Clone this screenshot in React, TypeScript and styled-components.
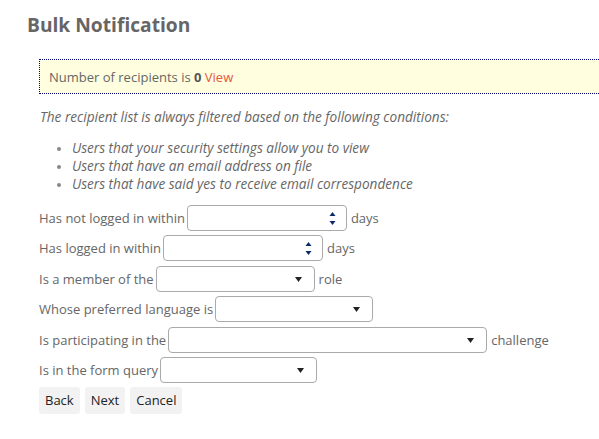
import React from "react";
import styled, { createGlobalStyle } from "styled-components";

const Global = createGlobalStyle`
  html, body { margin: 0; padding: 0; background: #fff; }
  body { font-family: "Open Sans", "Liberation Sans", sans-serif; color: #666; overflow: hidden; }
  * { box-sizing: border-box; }
`;

const Page = styled.div`
  padding: 11px 0 0 27px;
`;

const Title = styled.h1`
  margin: 0;
  font-size: 19.2px;
  line-height: 27px;
  font-weight: 700;
  color: #666;
`;

const Content = styled.div`
  margin: 21px 0 0 12px;
  font-size: 13px;
`;

const Notice = styled.div`
  height: 35px;
  display: flex;
  align-items: center;
  padding: 0 9px;
  background: #ffffe0;
  border: 1px dotted #000080;
  border-right: none;
  color: #666;
`;

const Strong = styled.b`
  font-weight: 700;
  color: #555;
`;

const LinkText = styled.a`
  color: #e8543f;
  text-decoration: none;
`;

const Intro = styled.p`
  margin: 14px 0 0 1px;
  font-style: italic;
  font-size: 13.6px;
  line-height: 18px;
  color: #666;
`;

const Conditions = styled.ul`
  margin: 13px 0 0 0;
  padding-left: 33px;
  font-style: italic;
  font-size: 13.6px;
  line-height: 18px;
  color: #666;
  li::marker { color: #888; font-size: 12px; }
`;

const Form = styled.div`
  margin-top: 12px;
  display: flex;
  flex-direction: column;
  gap: 4.4px;
`;

const Row = styled.div`
  display: flex;
  align-items: center;
  gap: 2px;
  height: 26px;
  white-space: nowrap;
`;

const Label = styled.span`
  color: #666;
`;

const Suffix = styled.span`
  margin-left: 2px;
  color: #666;
`;

const FieldBox = styled.div<{ $w: number }>`
  position: relative;
  width: ${(p) => p.$w}px;
  height: 26px;
  border: 1px solid #aaa;
  border-radius: 4px;
  background: #fff;
  display: flex;
  align-items: center;
`;

const TextInput = styled.input`
  flex: 1;
  min-width: 0;
  height: 100%;
  border: none;
  outline: none;
  background: transparent;
  font: inherit;
  padding: 0 6px;
`;

const Select = styled.select`
  appearance: none;
  -webkit-appearance: none;
  width: 100%;
  height: 100%;
  border: none;
  outline: none;
  background: transparent;
  font: inherit;
  padding: 0 6px;
`;

const Spinner = styled.svg`
  position: absolute;
  right: 10px;
  top: 5px;
`;

const Caret = styled.svg`
  position: absolute;
  right: 12px;
  top: 10px;
  pointer-events: none;
`;

const Buttons = styled.div`
  display: flex;
  gap: 5px;
  margin-top: -0.4px;
`;

const Button = styled.button`
  height: 27px;
  padding: 0 6px;
  border: none;
  border-radius: 3px;
  background: #f2f2f2;
  color: #222;
  font: inherit;
  font-size: 13px;
  cursor: pointer;
`;

const NumberField = ({ w }: { w: number }) => (
  <FieldBox $w={w}>
    <TextInput type="text" />
    <Spinner width="7" height="15" viewBox="0 0 7 15">
      <path d="M3.5 1 L6.5 5 L0.5 5 Z" fill="#0b2a6e" />
      <path d="M0.5 10 L6.5 10 L3.5 14 Z" fill="#0b2a6e" />
    </Spinner>
  </FieldBox>
);

const SelectField = ({ w }: { w: number }) => (
  <FieldBox $w={w}>
    <Select defaultValue="">
      <option value=""></option>
    </Select>
    <Caret width="7" height="5" viewBox="0 0 7 5">
      <path d="M0 0 L7 0 L3.5 5 Z" fill="#222" />
    </Caret>
  </FieldBox>
);

export default function App() {
  return (
    <Page>
      <Global />
      <Title>Bulk Notification</Title>
      <Content>
        <Notice>
          <span>
            Number of recipients is <Strong>0</Strong> <LinkText href="#">View</LinkText>
          </span>
        </Notice>
        <Intro>The recipient list is always filtered based on the following conditions:</Intro>
        <Conditions>
          <li>Users that your security settings allow you to view</li>
          <li>Users that have an email address on file</li>
          <li>Users that have said yes to receive email correspondence</li>
        </Conditions>
        <Form>
          <Row>
            <Label>Has not logged in within</Label>
            <NumberField w={160} />
            <Suffix>days</Suffix>
          </Row>
          <Row>
            <Label>Has logged in within</Label>
            <NumberField w={160} />
            <Suffix>days</Suffix>
          </Row>
          <Row>
            <Label>Is a member of the</Label>
            <SelectField w={159} />
            <Suffix>role</Suffix>
          </Row>
          <Row>
            <Label>Whose preferred language is</Label>
            <SelectField w={158} />
          </Row>
          <Row>
            <Label>Is participating in the</Label>
            <SelectField w={319} />
            <Suffix>challenge</Suffix>
          </Row>
          <Row>
            <Label>Is in the form query</Label>
            <SelectField w={157} />
          </Row>
          <Buttons>
            <Button>Back</Button>
            <Button>Next</Button>
            <Button>Cancel</Button>
          </Buttons>
        </Form>
      </Content>
    </Page>
  );
}
